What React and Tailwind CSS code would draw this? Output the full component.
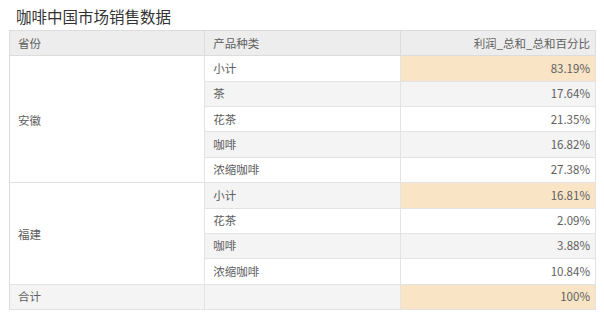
import React from "react";

const font = { fontFamily: '"Noto Sans CJK SC", "Noto Sans", sans-serif' };

const rows = [
  { prov: "安徽", span: 5, items: [
    ["小计", "83.19%", true],
    ["茶", "17.64%"],
    ["花茶", "21.35%"],
    ["咖啡", "16.82%"],
    ["浓缩咖啡", "27.38%"],
  ] },
  { prov: "福建", span: 4, items: [
    ["小计", "16.81%", true],
    ["花茶", "2.09%"],
    ["咖啡", "3.88%"],
    ["浓缩咖啡", "10.84%"],
  ] },
];

export default function App() {
  let idx = 0;
  const cells = [];
  rows.forEach((g, gi) => {
    cells.push(
      <div
        key={"p" + gi}
        className="flex items-center pl-2 pt-[2px] bg-white border-r border-b border-[#e3e3e3]"
        style={{ gridRow: `span ${g.span} / span ${g.span}` }}
      >
        {g.prov}
      </div>
    );
    g.items.forEach((it, ii) => {
      const gray = idx % 2 === 1;
      idx++;
      cells.push(
        <div
          key={`c${gi}-${ii}`}
          className={`flex items-center pl-2 border-r border-b border-[#e3e3e3] ${gray ? "bg-[#f4f4f4]" : "bg-white"}`}
        >
          {it[0]}
        </div>
      );
      cells.push(
        <div
          key={`v${gi}-${ii}`}
          className={`flex items-center justify-end pr-[5px] border-r border-b border-[#e3e3e3] ${it[2] ? "bg-[#f9e5c6]" : gray ? "bg-[#f4f4f4]" : "bg-white"}`}
        >
          {it[1]}
        </div>
      );
    });
  });

  return (
    <div className="w-[604px] h-[322px] bg-white overflow-hidden" style={font}>
      <div className="pl-4 pt-[5px] h-[30px] text-[15.5px] leading-[22px] text-[#333]">
        咖啡中国市场销售数据
      </div>
      <div className="ml-[9px] w-[587px] grid grid-cols-3 auto-rows-[25.36px] border-l border-t border-[#dcdcdc] text-[11.5px] text-[#606060]">
        <div className="flex items-center pl-2 bg-[#ededed] border-r border-b border-[#dcdcdc]">省份</div>
        <div className="flex items-center pl-2 bg-[#ededed] border-r border-b border-[#dcdcdc]">产品种类</div>
        <div className="flex items-center justify-end pr-[5px] bg-[#ededed] border-r border-b border-[#dcdcdc]">利润_总和_总和百分比</div>
        {cells}
        <div className="flex items-center pl-2 bg-[#f4f4f4] border-r border-b border-[#e3e3e3]">合计</div>
        <div className="bg-[#f4f4f4] border-r border-b border-[#e3e3e3]"></div>
        <div className="flex items-center justify-end pr-[5px] bg-[#f9e5c6] border-r border-b border-[#e3e3e3]">100%</div>
      </div>
    </div>
  );
}
